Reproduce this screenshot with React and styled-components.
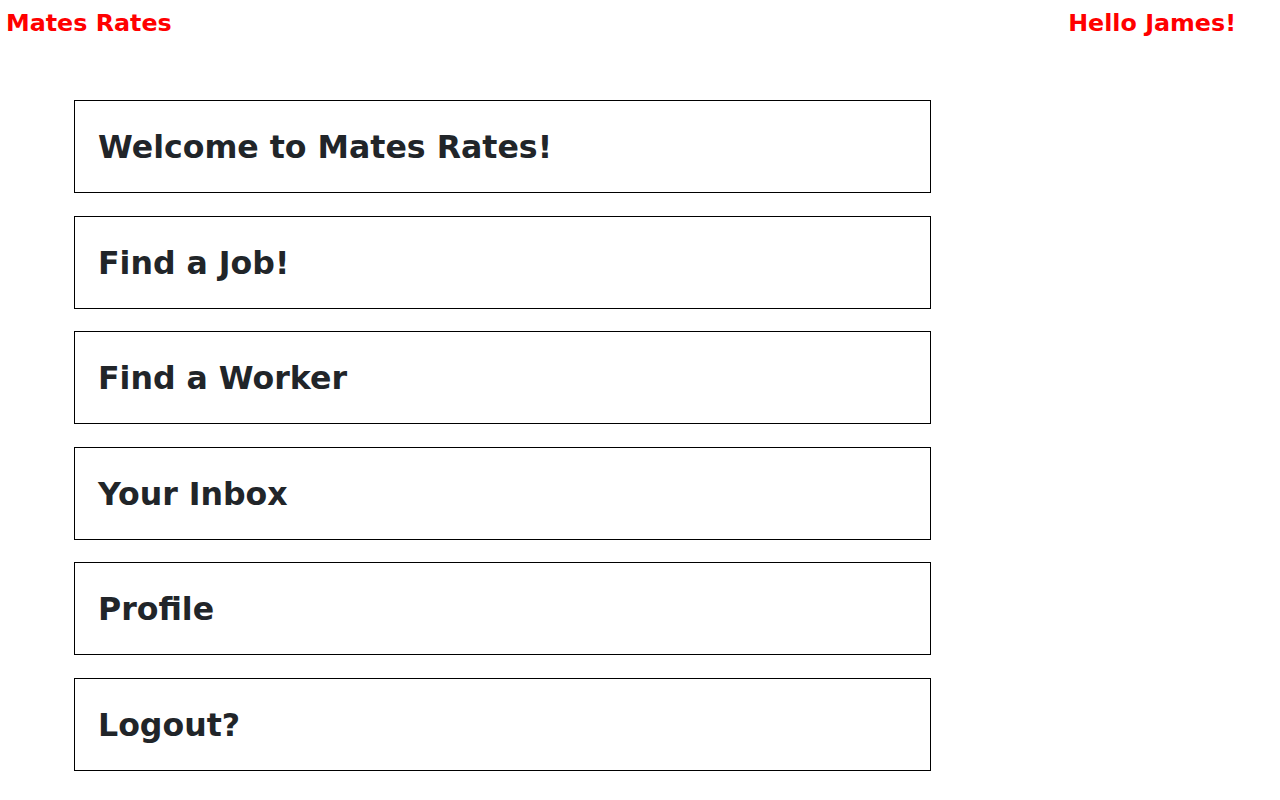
import React from "react";
import styled, { createGlobalStyle } from "styled-components";

const GlobalStyle = createGlobalStyle`
  body {
    margin: 0;
    background: #fff;
    font-family: "DejaVu Sans", Verdana, sans-serif;
  }
`;

const links = [
  "Welcome to Mates Rates!",
  "Find a Job!",
  "Find a Worker",
  "Your Inbox",
  "Profile",
  "Logout?",
];

export default function App() {
  return (
    <>
      <GlobalStyle />
      <Header>
        <Brand>Mates Rates</Brand>
        <Brand>Hello James!</Brand>
      </Header>
      <Menu>
        {links.map((label) => (
          <Card key={label}>
            <Title>{label}</Title>
          </Card>
        ))}
      </Menu>
    </>
  );
}

const Header = styled.header`
  display: flex;
  justify-content: space-between;
  align-items: center;
  height: 44px;
  padding: 1px 44px 0 6px;
`;

const Brand = styled.span`
  color: #ff0000;
  font-weight: bold;
  font-size: 23.8px;
`;

const Menu = styled.nav`
  display: flex;
  flex-direction: column;
  gap: 22.6px;
  width: 857px;
  margin: 55px 0 0 74px;
`;

const Card = styled.div`
  display: flex;
  align-items: center;
  box-sizing: border-box;
  height: 93px;
  padding: 3px 23px 0;
  border: 1px solid #000;
`;

const Title = styled.h2`
  margin: 0;
  color: #212529;
  font-size: 31.6px;
  font-weight: bold;
  line-height: 1.2;
`;
